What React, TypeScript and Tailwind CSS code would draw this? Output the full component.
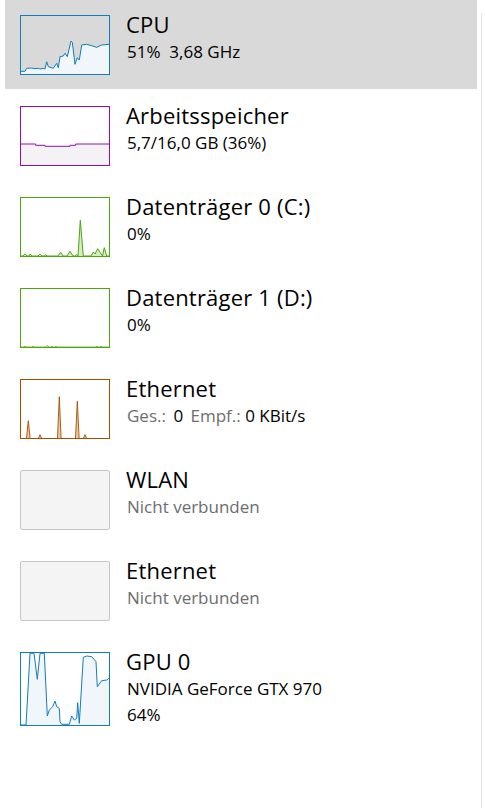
import React from "react";

type Row = {
  title: string;
  lines: React.ReactNode[];
  chart: React.ReactNode;
  border: string;
  selected?: boolean;
  tall?: boolean;
};

const pts = (p: number[][]) => p.map((q) => q.join(",")).join(" ");

const cpu = [
  [0, 55.3], [4, 55.3], [5.7, 52.3], [10.7, 52], [14, 52.7], [17.3, 52.3], [19, 53], [22.3, 52.3],
  [24, 53], [25.7, 45.7], [27.3, 50.7], [32.3, 52.3], [35.7, 47.3], [37.3, 51.7], [39, 40.7],
  [42.3, 40], [44, 37.3], [46.3, 40.7], [50, 25], [51.3, 26.3], [54, 48.3], [56.3, 41.7],
  [58.3, 44], [60.7, 29], [65.7, 28.3], [70.7, 29.7], [75.7, 31.3], [80.7, 29], [88, 28.3],
];

const mem = [
  [0, 37], [14.7, 37], [14.7, 38.3], [24, 38.3], [24, 39.3], [49, 39.3], [49, 38.3], [54.7, 38.3],
  [54.7, 37], [88, 37],
];

const disk0 = [
  [0, 58], [2, 58], [4, 56], [6, 58], [8, 58], [9, 56], [11, 58], [17, 58], [19, 56], [21, 58],
  [23, 58], [24.7, 56.7], [26, 58], [37, 58], [39.7, 54.3], [42, 58], [46, 58], [49, 53.3],
  [52, 58], [54, 58], [55.7, 56.7], [57, 58], [59.3, 22.3], [62.3, 58], [70, 58], [72.3, 54],
  [74, 56], [76.7, 50.7], [80, 55.7], [81.5, 58], [83.3, 49.7], [85.7, 58], [88, 58],
];

const disk1 = [
  [0, 58], [3, 58], [4, 57], [5, 58], [11, 58], [12, 57], [13, 58], [25, 58], [26, 56.5],
  [27, 57], [28, 58], [30, 58], [31, 57], [32, 58], [34, 58], [35, 57], [36, 58], [75, 58],
  [76, 57], [77, 58], [79, 58], [80, 57], [81, 58], [88, 58],
];

const gpu = [
  [0, 72], [5, 72], [9, 0.3], [13, 0.3], [16.3, 26.3], [19, 0.3], [23.3, 0.3], [26.3, 63],
  [28.3, 57], [31.7, 53.7], [34, 48], [35.7, 53.7], [38.3, 55.3], [39, 68.7], [40.7, 71.3],
  [48.3, 71.3], [50.7, 63], [53.3, 67], [55.7, 65.3], [56.7, 49.7], [58.3, 70.3], [62.3, 4.3],
  [65.7, 3], [70.7, 3.7], [75, 8.7], [76.3, 33.7], [80.7, 27.7], [85.7, 27], [88, 25.3],
];

const Area = ({ p, h, stroke, fill }: { p: number[][]; h: number; stroke: string; fill: string }) => (
  <svg width={88} height={h} viewBox={`0 0 88 ${h}`} className="block">
    <polygon points={pts([...p, [88, h], [0, h]])} fill={fill} />
    <polyline points={pts(p)} fill="none" stroke={stroke} strokeWidth={1} strokeLinejoin="round" />
  </svg>
);

// network traffic peaks
const Spikes = () => {
  const s = [
    [7.3, 40.7, 1.8],
    [19, 54.7, 1.5],
    [38.3, 16.7, 1.8],
    [56.3, 21.3, 1.8],
    [64, 54.7, 1.5],
  ];
  return (
    <svg width={88} height={58} viewBox="0 0 88 58" className="block">
      {s.map(([x, y, w], i) => (
        <g key={i}>
          <polygon points={pts([[x - w, 58], [x, y], [x + w, 58]])} fill="#ebc9a5" />
          <polyline points={pts([[x - w, 58], [x, y], [x + w, 58]])} fill="none" stroke="#a74f01" strokeWidth={0.9} />
        </g>
      ))}
    </svg>
  );
};

const Gray = ({ children }: { children: React.ReactNode }) => (
  <span className="text-[#6d6d6d]">{children}</span>
);

const rows: Row[] = [
  {
    title: "CPU",
    lines: ["51%\u00a0\u00a03,68 GHz"],
    border: "border-[#117dbb]",
    chart: <Area p={cpu} h={58} stroke="#117dbb" fill="#f1f6fa" />,
    selected: true,
  },
  {
    title: "Arbeitsspeicher",
    lines: ["5,7/16,0 GB (36%)"],
    border: "border-[#8b12ae]",
    chart: <Area p={mem} h={58} stroke="#8b12ae" fill="#f4f2f4" />,
  },
  {
    title: "Datenträger 0 (C:)",
    lines: ["0%"],
    border: "border-[#4da60c]",
    chart: <Area p={disk0} h={58} stroke="#4da60c" fill="#d6ecc6" />,
  },
  {
    title: "Datenträger 1 (D:)",
    lines: ["0%"],
    border: "border-[#4da60c]",
    chart: <Area p={disk1} h={58} stroke="#7cc04a" fill="#d6ecc6" />,
  },
  {
    title: "Ethernet",
    lines: [
      <>
        <Gray>Ges.:</Gray> <span className="mx-[3px]">0</span> <Gray>Empf.:</Gray> 0 KBit/s
      </>,
    ],
    border: "border-[#a74f01]",
    chart: <Spikes />,
  },
  {
    title: "WLAN",
    lines: [<Gray>Nicht verbunden</Gray>],
    border: "border-[#c6c6c6] rounded-[2px] bg-[#f4f4f4]",
    chart: null,
  },
  {
    title: "Ethernet",
    lines: [<Gray>Nicht verbunden</Gray>],
    border: "border-[#c6c6c6] rounded-[2px] bg-[#f4f4f4]",
    chart: null,
  },
  {
    title: "GPU 0",
    lines: ["NVIDIA GeForce GTX 970", "64%"],
    border: "border-[#117dbb]",
    chart: <Area p={gpu} h={72} stroke="#117dbb" fill="#f1f6fa" />,
    tall: true,
  },
];

export default function App() {
  return (
    <div className="flex h-[808px] w-[485px] bg-white font-['Open_Sans',sans-serif] text-[#000]">
      <div className="w-[477px] pl-[5px]">
        {rows.map((r, i) => (
          <div
            key={i}
            className={`flex gap-4 pl-[15px] pt-[15px] ${r.selected ? "h-[89px] mb-[2px] bg-[#d9d9d9]" : "h-[91px]"}`}
          >
            <div className={`w-[90px] shrink-0 border ${r.tall ? "h-[74px]" : "h-[60px]"} ${r.border}`}>
              {r.chart}
            </div>
            <div className="-mt-[4px]">
              <div className="text-[22px] leading-[26px] tracking-[0.2px]">{r.title}</div>
              <div className="mt-[2px] pl-[1px] text-[17px] leading-[26px]">
                {r.lines.map((l, j) => (
                  <div key={j}>{l}</div>
                ))}
              </div>
            </div>
          </div>
        ))}
      </div>
      <div className="ml-[4px] mt-[13px] w-px bg-[#e3e3e3]" />
    </div>
  );
}
